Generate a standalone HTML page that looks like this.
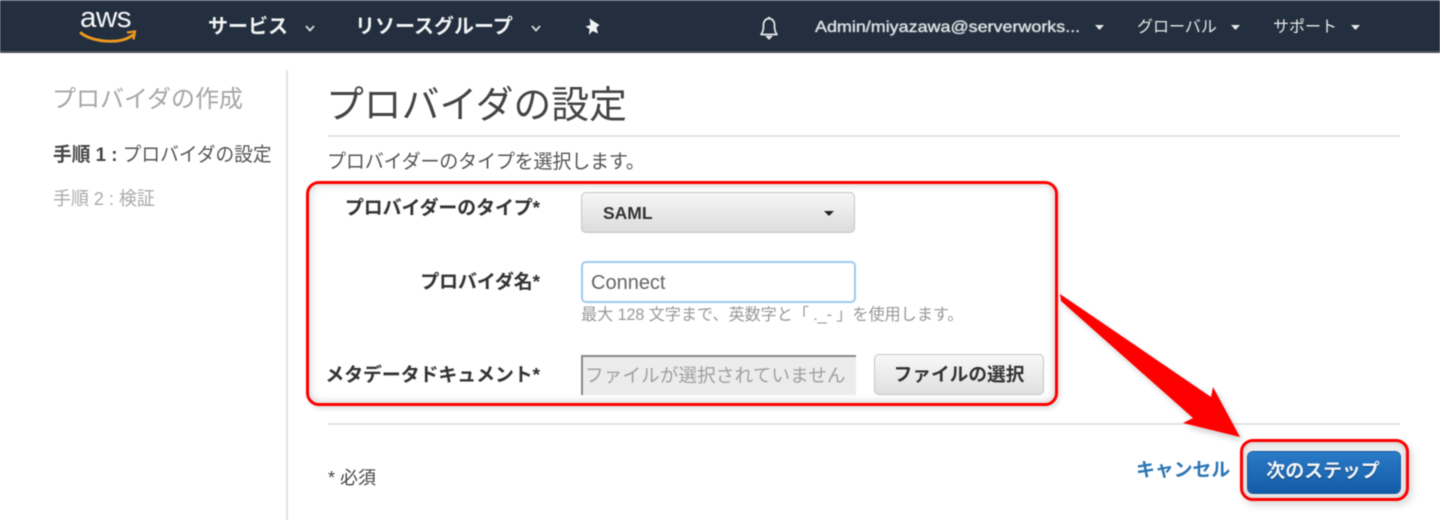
<!DOCTYPE html>
<html lang="ja">
<head>
<meta charset="utf-8">
<title>プロバイダの設定</title>
<style>
html,body{margin:0;padding:0;background:#fff}
#p{position:relative;width:1440px;height:520px;overflow:hidden;background:#fff;font-family:"Liberation Sans","Noto Sans CJK JP",sans-serif;filter:blur(.6px)}
#p div,#p a{position:absolute;white-space:nowrap}
.nav{color:#f2f3f3;font-weight:700;font-size:20px;line-height:24px}
.nav2{color:#e6e8ea;font-size:15px;line-height:20px}
.lab{color:#333;font-weight:700;font-size:18.850px;line-height:22px;text-align:right;right:900px;text-shadow:0 0 1px rgba(0,0,0,.2)}
</style>
</head>
<body>
<div id="p">
  <!-- nav -->
  <div style="left:0;top:0;width:1440px;height:53px;background:#232f3e;border-top:1px solid #55606c;box-sizing:border-box;border-bottom:2px solid #4a525c"></div>
  <div style="left:80px;top:3px;color:#f4f5f6;font-size:29px;line-height:30px;letter-spacing:-.5px;transform:scaleX(1.02);transform-origin:left">aws</div>
  <svg style="position:absolute;left:78px;top:28px" width="60" height="18" viewBox="0 0 60 18">
    <path d="M3 5 C14 14 42 17 55 7" fill="none" stroke="#f09a1e" stroke-width="2.800" stroke-linecap="round"/>
    <path d="M49 4.500 L57 3.500 L55.500 11.500" fill="none" stroke="#f09a1e" stroke-width="2.200"/>
  </svg>
  <div class="nav" style="left:208px;top:15px">サービス</div>
  <svg style="position:absolute;left:304px;top:24px" width="12" height="9" viewBox="0 0 12 9"><path d="M2 2 L6 6.500 L10 2" fill="none" stroke="#d5d8db" stroke-width="1.800"/></svg>
  <div class="nav" style="left:355px;top:15px">リソースグループ</div>
  <svg style="position:absolute;left:530px;top:24px" width="12" height="9" viewBox="0 0 12 9"><path d="M2 2 L6 6.500 L10 2" fill="none" stroke="#d5d8db" stroke-width="1.800"/></svg>
  <svg style="position:absolute;left:583px;top:17px" width="20" height="20" viewBox="0 0 20 20"><path d="M6.500 1.500 L11 4.500 L16.500 8 L13.500 10.500 L15 16.500 L9.500 14 L6 18 L6.500 12 L2.500 9.500 L7.500 8 Z" fill="#f2f3f3"/></svg>
  <svg style="position:absolute;left:756px;top:14px" width="26" height="28" viewBox="0 0 26 28">
    <path d="M5 20.500 C7.500 17.500 7.500 14 7.500 11 C7.500 7 10 4.500 13 4.500 C16 4.500 18.500 7 18.500 11 C18.500 14 18.500 17.500 21 20.500 Z" fill="none" stroke="#e8eaec" stroke-width="1.700" stroke-linejoin="round"/>
    <path d="M10.500 22.500 H15.500 L13 25 Z M12 3.500 H14" fill="#e8eaec" stroke="#e8eaec" stroke-width="1.200"/>
  </svg>
  <div class="nav2" style="left:815px;top:18px;font-size:16px;transform:scaleX(1.12);transform-origin:left;text-shadow:0 0 1px #e6e8ea">Admin/miyazawa@serverworks...</div>
  <svg style="position:absolute;left:1094px;top:24px" width="11" height="7" viewBox="0 0 11 7"><path d="M1 1 H10 L5.500 6 Z" fill="#e6e8ea"/></svg>
  <div class="nav2" style="left:1137px;top:18px;font-size:16px">グローバル</div>
  <svg style="position:absolute;left:1230px;top:24px" width="11" height="7" viewBox="0 0 11 7"><path d="M1 1 H10 L5.500 6 Z" fill="#e6e8ea"/></svg>
  <div class="nav2" style="left:1273px;top:18px;font-size:16px">サポート</div>
  <svg style="position:absolute;left:1350px;top:24px" width="11" height="7" viewBox="0 0 11 7"><path d="M1 1 H10 L5.500 6 Z" fill="#e6e8ea"/></svg>

  <!-- sidebar -->
  <div style="left:52px;top:85px;color:#a6a6a6;font-size:24px;line-height:30px">プロバイダの作成</div>
  <div style="left:53px;top:143px;color:#555;font-size:19.200px;line-height:26px;transform:scaleX(.975);transform-origin:left"><b style="color:#444">手順 1 :</b> プロバイダの設定</div>
  <div style="left:53px;top:187px;color:#aaa;font-size:18.500px;line-height:24px;transform:scaleX(.97);transform-origin:left">手順 2 : 検証</div>
  <div style="left:286px;top:70px;width:2px;height:450px;background:#e3e3e3"></div>

  <!-- heading -->
  <div style="left:326px;top:84px;color:#444;font-size:37.800px;line-height:44px">プロバイダの設定</div>
  <div style="left:328px;top:135px;width:1072px;height:2px;background:#e2e2e2"></div>
  <div style="left:327px;top:151px;color:#555;font-size:19.100px;line-height:24px;letter-spacing:-.25px">プロバイダーのタイプを選択します。</div>

  <!-- annotated box -->
  <div style="left:306px;top:181px;width:752px;height:225px;box-sizing:border-box;border:3px solid #f00;border-radius:13px;box-shadow:inset 0 0 9px rgba(0,0,0,.22),2px 3px 5px rgba(0,0,0,.12)"></div>

  <div class="lab" style="top:197px">プロバイダーのタイプ*</div>
  <div style="left:581px;top:192px;width:274px;height:41px;box-sizing:border-box;border:1px solid #c5c5c5;border-radius:5px;background:linear-gradient(#f6f6f6,#dcdcdc)"></div>
  <div style="left:603px;top:203px;color:#333;font-weight:700;font-size:17.500px;line-height:20px">SAML</div>
  <svg style="position:absolute;left:823px;top:210px" width="12" height="7" viewBox="0 0 12 7"><path d="M1 1 H11 L6 6 Z" fill="#222"/></svg>

  <div class="lab" style="top:271px">プロバイダ名*</div>
  <div style="left:581px;top:261px;width:275px;height:42px;box-sizing:border-box;border:2px solid #9ccbf2;border-radius:5px;background:#fff"></div>
  <div style="left:591px;top:271px;color:#666;font-size:20px;line-height:24px">Connect</div>
  <div style="left:581px;top:304px;color:#999;font-size:16.200px;line-height:22px;letter-spacing:-.1px">最大 128 文字まで、英数字と「 ._- 」を使用します。</div>

  <div class="lab" style="top:364px">メタデータドキュメント*</div>
  <div style="left:581px;top:355px;width:275px;height:40px;box-sizing:border-box;border-left:2px solid #8a8a8a;border-top:2px solid #8a8a8a;background:#ececec"></div>
  <div style="left:585px;top:363px;color:#a0a0a0;font-size:18.700px;line-height:26px">ファイルが選択されていません</div>
  <div style="left:874px;top:354px;width:170px;height:41px;box-sizing:border-box;border:1px solid #c5c5c5;border-radius:5px;background:linear-gradient(#f8f8f8,#e0e0e0)"></div>
  <div style="left:874px;top:363px;width:170px;text-align:center;color:#333;font-weight:700;font-size:18.700px;line-height:24px">ファイルの選択</div>

  <!-- divider -->
  <div style="left:328px;top:423px;width:1072px;height:2px;background:#e2e2e2"></div>

  <!-- arrow -->
  <svg style="position:absolute;left:1050px;top:285px" width="210" height="165" viewBox="0 0 210 165">
    <path d="M10 9 L11 16 L143 133 L133 138 L190 152 L163 102 L161 112 Z" fill="#000" opacity=".18" transform="translate(3,4)" style="filter:blur(3px)"/>
    <path d="M10 9 L11 16 L143 133 L133 138 L190 152 L163 102 L161 112 Z" fill="#f00"/>
  </svg>

  <!-- footer -->
  <div style="left:328px;top:465px;color:#444;font-size:18px;line-height:26px">* 必須</div>
  <div style="left:1136px;top:458px;color:#2b76b5;font-weight:700;font-size:19px;line-height:26px;letter-spacing:-.2px">キャンセル</div>
  <div style="left:1240px;top:439px;width:169px;height:62px;box-sizing:border-box;border:3px solid #f00;border-radius:13px;background:#efefef;box-shadow:inset 0 0 6px rgba(0,0,0,.2),3px 4px 8px rgba(0,0,0,.15)"></div>
  <div style="left:1248px;top:452px;width:152px;height:41px;border-radius:5px;background:linear-gradient(#2a7bc8,#145ba6);box-shadow:0 0 0 1px #19599b"></div>
  <div style="left:1248px;top:459px;width:150px;text-align:center;color:#f2f5f8;font-weight:700;font-size:19px;line-height:26px;letter-spacing:-.1px;text-shadow:0 1px 1px rgba(0,0,0,.4)">次のステップ</div>
</div>
</body>
</html>
